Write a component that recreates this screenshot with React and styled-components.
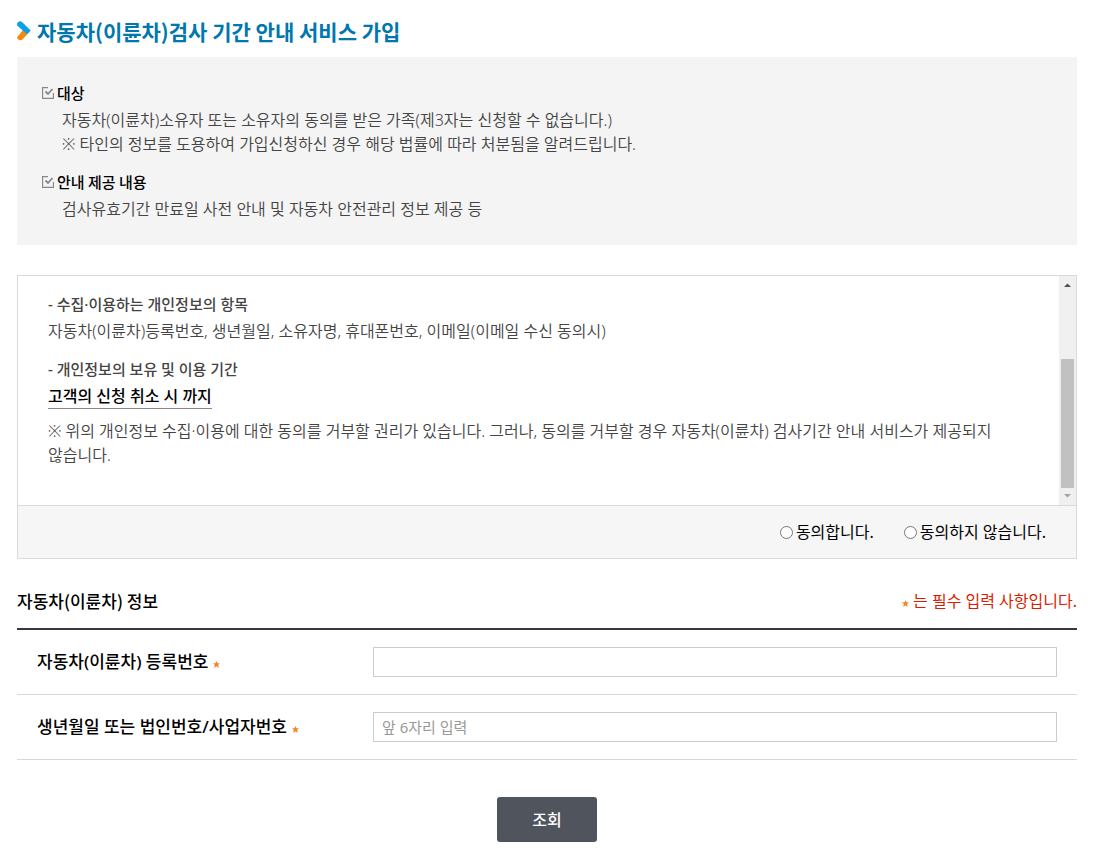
import React from 'react';
import styled, { createGlobalStyle } from 'styled-components';

const GlobalStyle = createGlobalStyle`
  * { box-sizing: border-box; }
  body {
    margin: 0;
    background: #fff;
    color: #000;
    font: 350 16px/24px "Noto Sans", "Noto Sans CJK KR", sans-serif;
    word-break: keep-all;
  }
  h1, h2, h3, p { margin: 0; }
`;

const Page = styled.main`
  padding: 15px 25px 11px 17px;
`;

const Title = styled.h1`
  display: flex;
  align-items: center;
  gap: 6px;
  margin-bottom: 10px;
  color: #0077ad;
  font-family: "Noto Sans CJK KR", sans-serif;
  font-size: 21px;
  font-weight: 700;
  line-height: 32px;
`;

const Notice = styled.section`
  padding: 24px 25px;
  background: #f4f4f4;
`;

const NoticeHeading = styled.h2`
  display: flex;
  align-items: center;
  gap: 3px;
  margin-bottom: 3px;
  font-family: "Noto Sans CJK KR", sans-serif;
  font-size: 15px;
  font-weight: 500;
  line-height: 24px;

  p + & { margin-top: 14px; }
`;

const NoticeText = styled.p`
  padding-left: 20px;
  color: #444;
`;

const Terms = styled.section`
  margin-top: 30px;
  border: 1px solid #dadada;
`;

const TermsView = styled.div`
  display: flex;
  background: #fff;
`;

const TermsBody = styled.div`
  flex: 1;
  min-width: 0;
  padding: 16px 50px 38px 30px;
  color: #444;
`;

const TermsHeading = styled.h3`
  margin-bottom: 3px;
  font-size: 15px;
  font-weight: 500;
  line-height: 24px;

  p + & { margin-top: 14px; }
`;

const Period = styled.strong`
  display: block;
  width: fit-content;
  margin-bottom: 10px;
  border-bottom: 1px solid #888;
  color: #000;
  font-weight: 500;
  line-height: 24px;
`;

const Scrollbar = styled.div`
  display: flex;
  flex-direction: column;
  align-items: center;
  width: 17px;
  background: #f0f0f0;
`;

const ScrollArrow = styled.svg`
  width: 17px;
  height: 17px;
`;

const ScrollTrack = styled.div`
  display: flex;
  flex: 1;
  flex-direction: column;
  justify-content: flex-end;
`;

const ScrollThumb = styled.div`
  width: 13px;
  height: 66%;
  background: #c1c1c1;
`;

const Consent = styled.div`
  display: flex;
  justify-content: flex-end;
  gap: 30px;
  padding: 14px 30px;
  border-top: 1px solid #dadada;
  background: #f6f6f6;
`;

const Choice = styled.label`
  display: flex;
  align-items: center;
  gap: 3px;
  font-weight: 400;
`;

const Radio = styled.input`
  width: 13px;
  height: 13px;
  margin: 0;
`;

const FormHeader = styled.header`
  display: flex;
  align-items: center;
  justify-content: space-between;
  padding: 30px 0 15px;
  border-bottom: 2px solid #353844;
`;

const FormTitle = styled.h2`
  font-family: "Noto Sans CJK KR", sans-serif;
  font-size: 17px;
  font-weight: 500;
  line-height: 24px;
`;

const RequiredNote = styled.p`
  display: flex;
  align-items: center;
  gap: 4px;
  color: #dc1c00;
  font-weight: 400;
`;

const Field = styled.div`
  display: flex;
  align-items: center;
  padding: 17px 20px;
  border-bottom: 1px solid #d8d8d8;
`;

const FieldLabel = styled.label`
  display: flex;
  align-items: center;
  gap: 5px;
  flex: 0 0 336px;
  font-size: 17px;
  font-weight: 500;
`;

const TextInput = styled.input`
  flex: 1;
  min-width: 0;
  height: 30px;
  padding: 0 8px;
  border: 1px solid #ccc;
  background: #fff;
  color: #333;
  font: 400 15px/24px "Noto Sans", "Noto Sans CJK KR", sans-serif;

  &::placeholder { color: #999; opacity: 1; }
`;

const Actions = styled.div`
  display: flex;
  justify-content: center;
  margin-top: 37px;
`;

const SubmitButton = styled.button`
  width: 100px;
  height: 45px;
  padding: 0;
  border: 0;
  border-radius: 3px;
  background: #50545c;
  color: #fff;
  font: 500 16px/24px "Noto Sans", "Noto Sans CJK KR", sans-serif;
`;

const StarIcon = styled.svg`
  width: 7px;
  height: 7px;
  margin-top: 4px;
`;

const TitleMark = () => (
  <svg width="14" height="20" viewBox="0 0 14 20" aria-hidden="true">
    <path d="M0 16.5 5.5 9.5H13.5L5.8 18.3Q4.3 19.6 2.6 19.2 0 18.4 0 16.5Z" fill="#f58a0b" />
    <path d="M0 3.5Q0 .8 2.6.4 4.2.2 5.3 1.2L13.7 9.6 10 13.2 1 5.3Q0 4.6 0 3.5Z" fill="#0ba0e8" />
  </svg>
);

const CheckMark = () => (
  <svg width="12" height="12" viewBox="0 0 12 12" fill="none" stroke="#888" aria-hidden="true">
    <path d="M6 .5H.5V11.5H11.5V6" strokeWidth="1.3" />
    <path d="M3.5 4.5 6 7 10.5 2" strokeWidth="1.8" />
  </svg>
);

const Star = () => (
  <StarIcon viewBox="0 0 6 6" aria-hidden="true">
    <path d="M3 0 3.8 2H6L4.4 3.5 5 6 3 4.6 1 6 1.6 3.5 0 2H2.2Z" fill="#f5841f" />
  </StarIcon>
);

export default function App() {
  return (
    <>
      <GlobalStyle />
      <Page>
        <Title><TitleMark />자동차(이륜차)검사 기간 안내 서비스 가입</Title>

        <Notice>
          <NoticeHeading><CheckMark />대상</NoticeHeading>
          <NoticeText>자동차(이륜차)소유자 또는 소유자의 동의를 받은 가족(제3자는 신청할 수 없습니다.)</NoticeText>
          <NoticeText>※ 타인의 정보를 도용하여 가입신청하신 경우 해당 법률에 따라 처분됨을 알려드립니다.</NoticeText>
          <NoticeHeading><CheckMark />안내 제공 내용</NoticeHeading>
          <NoticeText>검사유효기간 만료일 사전 안내 및 자동차 안전관리 정보 제공 등</NoticeText>
        </Notice>

        <Terms>
          <TermsView>
            <TermsBody>
              <TermsHeading>- 수집·이용하는 개인정보의 항목</TermsHeading>
              <p>자동차(이륜차)등록번호, 생년월일, 소유자명, 휴대폰번호, 이메일(이메일 수신 동의시)</p>
              <TermsHeading>- 개인정보의 보유 및 이용 기간</TermsHeading>
              <Period>고객의 신청 취소 시 까지</Period>
              <p>※ 위의 개인정보 수집·이용에 대한 동의를 거부할 권리가 있습니다. 그러나, 동의를 거부할 경우 자동차(이륜차) 검사기간 안내 서비스가 제공되지 않습니다.</p>
            </TermsBody>
            <Scrollbar aria-hidden="true">
              <ScrollArrow viewBox="0 0 17 17"><path d="M5 11 8.5 7.5 12 11Z" fill="#505050" /></ScrollArrow>
              <ScrollTrack><ScrollThumb /></ScrollTrack>
              <ScrollArrow viewBox="0 0 17 17"><path d="M5 6 8.5 9.5 12 6Z" fill="#a3a3a3" /></ScrollArrow>
            </Scrollbar>
          </TermsView>
          <Consent role="radiogroup" aria-label="개인정보 수집·이용 동의">
            <Choice><Radio type="radio" name="consent" value="yes" />동의합니다.</Choice>
            <Choice><Radio type="radio" name="consent" value="no" />동의하지 않습니다.</Choice>
          </Consent>
        </Terms>

        <form onSubmit={(event) => event.preventDefault()}>
          <FormHeader>
            <FormTitle>자동차(이륜차) 정보</FormTitle>
            <RequiredNote><Star />는 필수 입력 사항입니다.</RequiredNote>
          </FormHeader>
          <Field>
            <FieldLabel htmlFor="plate">자동차(이륜차) 등록번호<Star /></FieldLabel>
            <TextInput id="plate" type="text" required />
          </Field>
          <Field>
            <FieldLabel htmlFor="owner-number">생년월일 또는 법인번호/사업자번호<Star /></FieldLabel>
            <TextInput id="owner-number" type="text" placeholder="앞 6자리 입력" required />
          </Field>
          <Actions><SubmitButton type="submit">조회</SubmitButton></Actions>
        </form>
      </Page>
    </>
  );
}
